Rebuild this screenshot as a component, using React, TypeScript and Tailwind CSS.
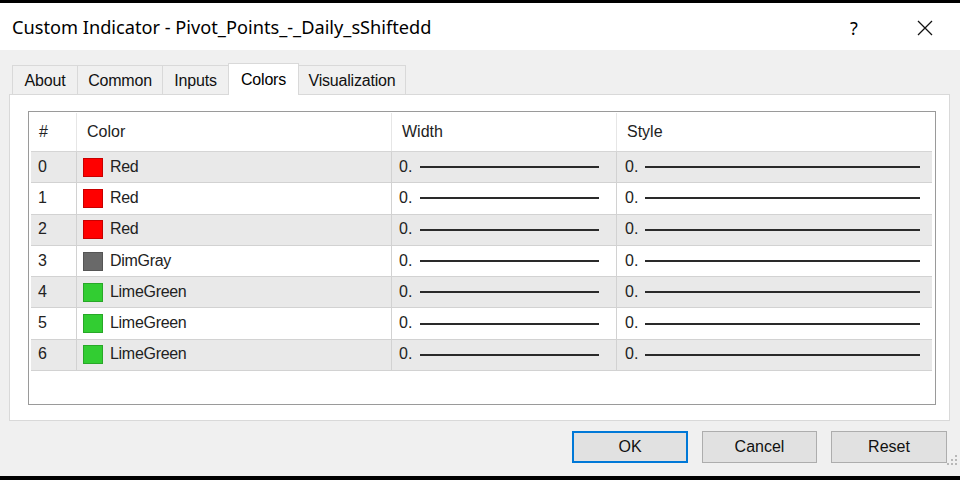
import React from "react";

const rows = [
  { n: "0", name: "Red", c: "#ff0000", b: "#c80000" },
  { n: "1", name: "Red", c: "#ff0000", b: "#c80000" },
  { n: "2", name: "Red", c: "#ff0000", b: "#c80000" },
  { n: "3", name: "DimGray", c: "#696969", b: "#555555" },
  { n: "4", name: "LimeGreen", c: "#32cd32", b: "#28a828" },
  { n: "5", name: "LimeGreen", c: "#32cd32", b: "#28a828" },
  { n: "6", name: "LimeGreen", c: "#32cd32", b: "#28a828" },
];

const tabs = [
  { t: "About", w: "w-[66px]" },
  { t: "Common", w: "w-[86px]" },
  { t: "Inputs", w: "w-[67px]" },
  { t: "Colors", w: "w-[71px]" },
  { t: "Visualization", w: "w-[108px]" },
];

export default function App() {
  return (
    <div
      className="w-[960px] h-[480px] bg-black flex flex-col overflow-hidden text-black"
      style={{ fontFamily: '"Liberation Sans", Arial, sans-serif' }}
    >
      <div className="h-[3px] shrink-0" />
      <div className="h-[473px] shrink-0 bg-[#f0f0f0] flex flex-col">
        {/* Title bar */}
        <div className="h-[47px] shrink-0 bg-white flex items-center pl-[12px] pr-[27px]">
          <div
            className="flex-1 text-[18.2px] leading-none pt-[2px]"
            style={{ fontFamily: '"Noto Sans", "Open Sans", sans-serif' }}
          >
            Custom Indicator - Pivot_Points_-_Daily_sShiftedd
          </div>
          <div
            className="text-[18px] leading-none w-[16px] mr-[51px] pt-[2px]"
            style={{ fontFamily: '"Noto Sans", sans-serif' }}
          >
            ?
          </div>
          <svg width="16" height="16" viewBox="0 0 16 16" className="mt-[2px]">
            <path d="M1 1 L15 15 M15 1 L1 15" stroke="#111" strokeWidth="1.3" fill="none" />
          </svg>
        </div>

        {/* Tabs */}
        <div className="flex items-end pl-[12px] pt-[13px] h-[44px] shrink-0 relative z-10">
          {tabs.map(({ t, w }) =>
            t === "Colors" ? (
              <div
                key={t}
                className={
                  w +
                  " h-[32px] -ml-[1px] bg-white border border-b-0 border-[#d9d9d9] flex justify-center items-start pt-[4px] text-[16px] -mb-[1px] tracking-[-0.2px]"
                }
              >
                {t}
              </div>
            ) : (
              <div
                key={t}
                className={
                  w +
                  " h-[29px] bg-[#f0f0f0] border border-b-0 border-[#d9d9d9] -ml-[1px] first:ml-0 flex justify-center items-center pt-[2px] text-[16px] tracking-[-0.2px] text-[#111]"
                }
              >
                {t}
              </div>
            )
          )}
        </div>

        {/* Panel */}
        <div className="ml-[9px] w-[941px] h-[327px] shrink-0 bg-white border border-[#d9d9d9] pt-[16px] pl-[18px]">
          <div className="w-[908px] h-[294px] border border-[#9a9a9a] p-[1px] pl-[2px] pr-[3px] flex flex-col">
            {/* Header */}
            <div className="h-[39px] shrink-0 flex border-b border-[#d5d5d5] text-[16px] text-[#222]">
              <div className="w-[46px] border-r border-[#e6e6e6] flex items-center pl-[8px]">#</div>
              <div className="w-[315px] border-r border-[#e6e6e6] flex items-center pl-[10px]">Color</div>
              <div className="w-[225px] border-r border-[#e6e6e6] flex items-center pl-[10px]">Width</div>
              <div className="flex-1 flex items-center pl-[10px]">Style</div>
            </div>
            {rows.map((r, i) => (
              <div
                key={r.n}
                className={
                  "h-[31.3px] shrink-0 flex border-b border-[#d2d2d2] text-[16px] text-[#222] " +
                  (i % 2 === 0 ? "bg-[#e9e9e9]" : "bg-white")
                }
              >
                <div className="w-[46px] border-r border-[#d2d2d2] flex items-center pl-[7px] pb-[1px]">{r.n}</div>
                <div className="w-[315px] border-r border-[#d2d2d2] flex items-center pl-[6px]">
                  <div
                    className="w-[20px] h-[19px] mr-[7px] border"
                    style={{ backgroundColor: r.c, borderColor: r.b }}
                  />
                  <span className="tracking-[-0.3px] pb-[1px]">{r.name}</span>
                </div>
                <div className="w-[225px] border-r border-[#d2d2d2] flex items-center pl-[7px]">
                  <span className="w-[21px] pb-[1px]">0.</span>
                  <div className="w-[179px] h-[2px] bg-[#2a2a2a]" />
                </div>
                <div className="flex-1 flex items-center pl-[8px]">
                  <span className="w-[20px] pb-[1px]">0.</span>
                  <div className="w-[275px] h-[2px] bg-[#2a2a2a]" />
                </div>
              </div>
            ))}
          </div>
        </div>

        {/* Buttons */}
        <div className="flex justify-end gap-[14px] pr-[13px] pt-[10px] relative">
          <button className="w-[116px] h-[32px] bg-[#e1e1e1] border-2 border-[#0078d7] text-[16px] text-[#111]">
            OK
          </button>
          <button className="w-[115px] h-[32px] bg-[#e1e1e1] border border-[#adadad] text-[16px] text-[#111]">
            Cancel
          </button>
          <button className="w-[116px] h-[32px] bg-[#e1e1e1] border border-[#adadad] text-[16px] text-[#111]">
            Reset
          </button>
          <svg width="12" height="12" viewBox="0 0 12 12" className="absolute right-[2px] top-[33px]">
            <g fill="#b8b8b8">
              <rect x="9" y="1" width="2" height="2" />
              <rect x="5" y="5" width="2" height="2" />
              <rect x="9" y="5" width="2" height="2" />
              <rect x="1" y="9" width="2" height="2" />
              <rect x="5" y="9" width="2" height="2" />
              <rect x="9" y="9" width="2" height="2" />
            </g>
          </svg>
        </div>
      </div>
    </div>
  );
}
